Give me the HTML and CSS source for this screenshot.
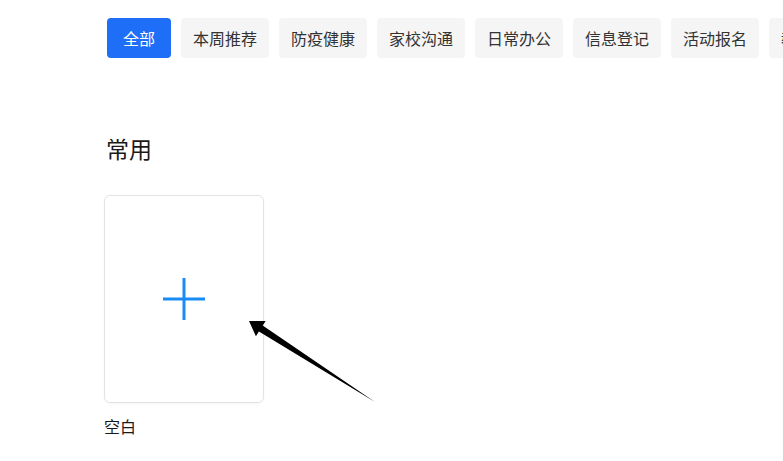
FILE: index.html
```html
<!DOCTYPE html>
<html lang="zh-CN">
<head>
    <meta charset="UTF-8">
    <title>模板</title>
    <link rel="stylesheet" href="styles.css">
</head>
<body>
<div class="page">
    <!--分类标签-->
    <div class="tabs">
        <span class="tab active">全部</span>
        <span class="tab">本周推荐</span>
        <span class="tab">防疫健康</span>
        <span class="tab">家校沟通</span>
        <span class="tab">日常办公</span>
        <span class="tab">信息登记</span>
        <span class="tab">活动报名</span>
        <span class="tab">教学管理</span>
    </div>
    <h2 class="title">常用</h2>
    <div class="card-list">
        <div class="card-item">
            <div class="card">
                <svg class="plus" width="42" height="42" viewBox="0 0 42 42">
                    <path d="M0 21H42M21 0V42" stroke="#1a8bf5" stroke-width="3"/>
                </svg>
            </div>
            <div class="card-name">空白</div>
        </div>
    </div>
</div>
<!--标注箭头，盖在页面上方-->
<svg class="arrow" width="783" height="461" viewBox="0 0 783 461">
    <polygon points="249,321 265.7,321 262.7,325.6 375,402 258.9,331.6 255.9,336.2" fill="#000"/>
</svg>
</body>
</html>
```
FILE: styles.css
```css
* {
    margin: 0;
    padding: 0;
}

body {
    font-family: "Noto Sans CJK SC", "Noto Sans", sans-serif;
    color: #333;
    background: #fff;
    overflow: hidden;
}

.page {
    padding: 18px 0 0 104px;
}

.tabs {
    display: flex;
    gap: 10px;
    margin-left: 3px;
    white-space: nowrap;
}

.tab {
    flex: none;
    min-width: 64px;
    height: 40px;
    padding: 0 12px;
    box-sizing: border-box;
    line-height: 40px;
    text-align: center;
    font-size: 16px;
    color: #333;
    background: #f5f5f5;
    border-radius: 4px;
}

.tab.active {
    color: #fff;
    background: #1e6ef8;
}

.title {
    margin: 75px 0 0 2px;
    height: 30px;
    line-height: 30px;
    font-size: 23px;
    font-weight: normal;
    color: #1a1a1a;
}

.card-list {
    display: flex;
    margin-top: 32px;
}

.card {
    display: flex;
    align-items: center;
    justify-content: center;
    width: 160px;
    height: 208px;
    box-sizing: border-box;
    border: 1px solid #e3e3e3;
    border-radius: 6px;
    box-shadow: 0 1px 3px rgba(0, 0, 0, 0.04);
}

.card-name {
    margin-top: 12px;
    line-height: 22px;
    font-size: 16px;
    color: #1a1a1a;
}

.arrow {
    position: absolute;
    top: 0;
    left: 0;
    pointer-events: none;
}
```
